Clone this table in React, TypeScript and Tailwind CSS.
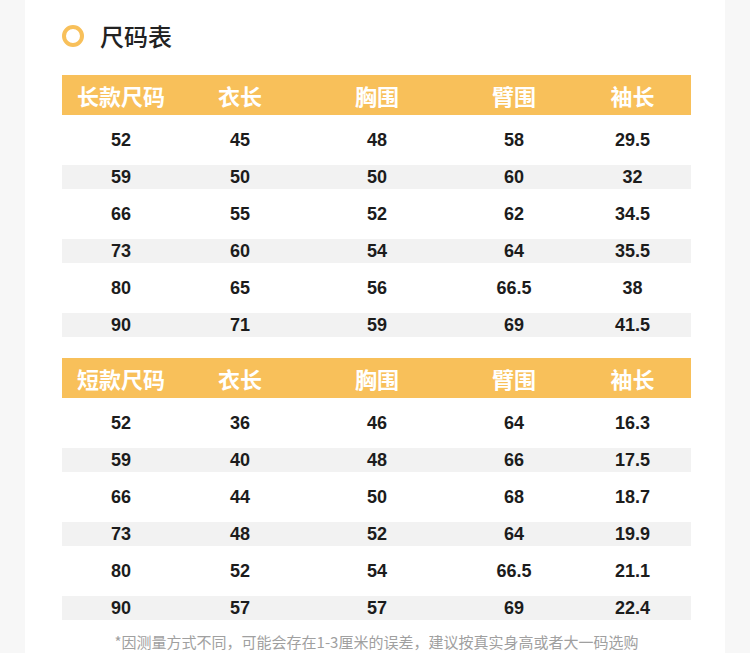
const longRows = [
  ["52", "45", "48", "58", "29.5"],
  ["59", "50", "50", "60", "32"],
  ["66", "55", "52", "62", "34.5"],
  ["73", "60", "54", "64", "35.5"],
  ["80", "65", "56", "66.5", "38"],
  ["90", "71", "59", "69", "41.5"],
];

const shortRows = [
  ["52", "36", "46", "64", "16.3"],
  ["59", "40", "48", "66", "17.5"],
  ["66", "44", "50", "68", "18.7"],
  ["73", "48", "52", "64", "19.9"],
  ["80", "52", "54", "66.5", "21.1"],
  ["90", "57", "57", "69", "22.4"],
];

const cols = "grid grid-cols-[118px_120px_154px_120px_117px]";

function SizeTable({ title, rows }: { title: string; rows: string[][] }) {
  const heads = [title, "衣长", "胸围", "臂围", "袖长"];
  return (
    <div className="w-[629px]">
      <div className={`${cols} h-[40px] items-center bg-[#f8c05a]`}>
        {heads.map((h) => (
          <div key={h} className="text-center text-[22px] font-bold leading-none text-white">
            {h}
          </div>
        ))}
      </div>
      {rows.map((row, i) => (
        <div
          key={i}
          className={`${cols} mt-[13px] h-[24px] items-center ${i % 2 === 1 ? "bg-[#f2f2f2]" : ""}`}
        >
          {row.map((v, j) => (
            <div
              key={j}
              className="text-center font-['Liberation_Sans',sans-serif] text-[18px] font-bold leading-none text-[#1c1c1c]"
            >
              {v}
            </div>
          ))}
        </div>
      ))}
    </div>
  );
}

export default function App() {
  return (
    <div className="flex h-[653px] w-[750px] justify-center overflow-hidden bg-[#f7f7f7] font-['Noto_Sans_CJK_SC',sans-serif]">
      <div className="h-full w-[700px] bg-white pl-[37px] pt-[21px]">
        <div className="flex h-[30px] items-center">
          <div className="h-[22px] w-[22px] rounded-full border-[4px] border-[#f8c05a]" />
          <span className="ml-[16px] text-[24px] font-medium leading-none text-[#222]">尺码表</span>
        </div>
        <div className="mt-[24px]">
          <SizeTable title="长款尺码" rows={longRows} />
        </div>
        <div className="mt-[21px]">
          <SizeTable title="短款尺码" rows={shortRows} />
        </div>
        <p className="mt-[13px] w-[629px] text-center text-[15px] leading-[18px] text-[#a0a0a0]">
          *因测量方式不同，可能会存在1-3厘米的误差，建议按真实身高或者大一码选购
        </p>
      </div>
    </div>
  );
}
